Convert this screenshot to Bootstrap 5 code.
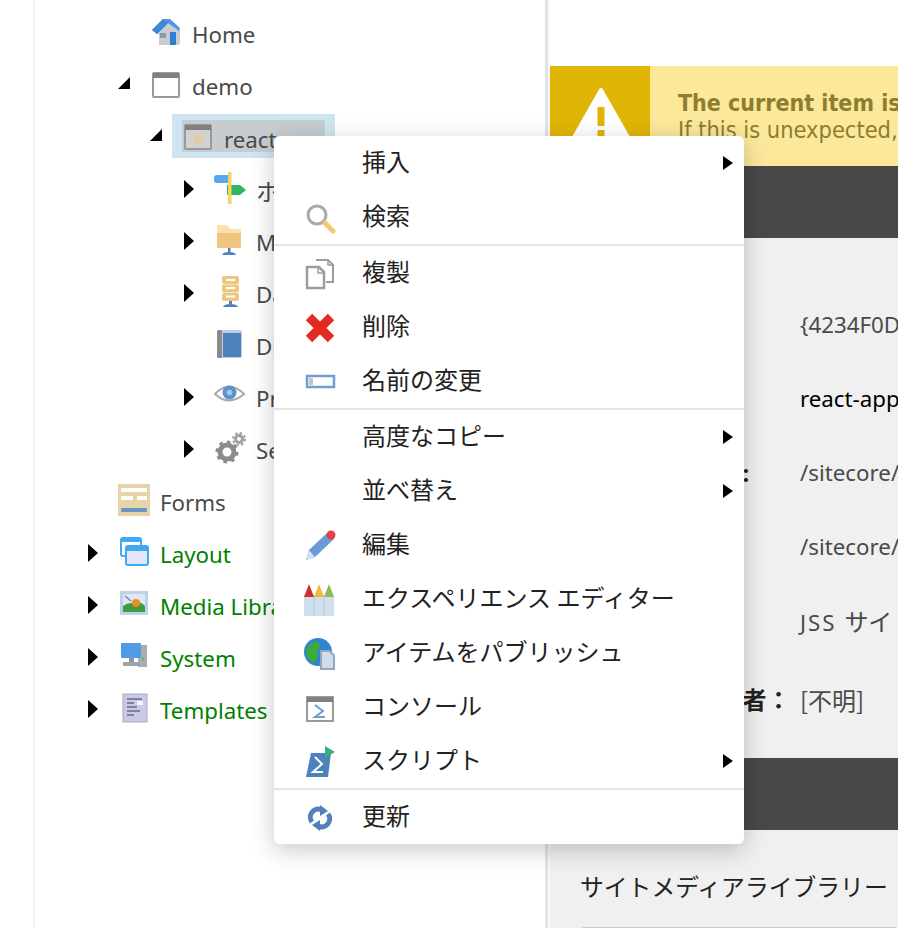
<!DOCTYPE html>
<html lang="ja">
<head>
  <meta charset="UTF-8" />
  <meta name="viewport" content="width=device-width, initial-scale=1.0"/>
  <title>Content Editor</title>
  <link href="https://cdn.jsdelivr.net/npm/bootstrap@5.3.3/dist/css/bootstrap.min.css" rel="stylesheet">
  <style>
    html, body { height: 100%; overflow: hidden; }
    body {
      background: #fff;
      font-family: "Noto Sans", "Noto Sans CJK JP", sans-serif;
      font-size: 22.3px;
      color: #4a4a4a;
    }
    .cjk-text { font-family: "Noto Sans CJK JP", sans-serif; font-size: 24px; }
    .tree-pane { width: 545px; flex: none; padding-left: 33px; }
    .tree-inner { border-left: 2px solid #f1f1f1; height: 100%; padding-top: 9px; }
    .tree-row { height: 52px; display: flex; align-items: center; white-space: nowrap; }
    .lvl-1 { padding-left: 51px; }
    .lvl-2 { padding-left: 83px; }
    .lvl-3 { padding-left: 115px; }
    .lvl-4 { padding-left: 147px; }
    .arrow-slot { width: 32px; flex: none; display: flex; padding-left: 2px; margin-top: -4px; }
    .arrow-down { padding-left: 0; margin-top: -8px; }
    .icon-slot { width: 32px; height: 32px; flex: none; margin-right: 10px; margin-top: -6px; }
    .tree-system { color: #008000; }
    .sel-outer { background: #cfe6f2; margin-top: -6px; padding: 6px 10px; }
    .sel-inner { background: #c6ccd0; height: 32px; display: flex; align-items: center; padding-right: 1px; }
    .sel-inner .icon-slot { margin-top: 0; }
    .sel-inner span { position: relative; top: 4px; }
    .arrow-short { width: 22px; }
    .splitter { width: 5px; flex: none; background: #f9f9f9; border-left: 3px solid #e3e3e3; }
    .main-pane { width: 348px; flex: none; overflow: hidden; white-space: nowrap; background: #f0f0f0; }
    .main-top { height: 66px; background: #fff; }
    .warn-box { height: 100px; background: #fce89b; color: #8c7d30; }
    .warn-icon { width: 100px; height: 100px; flex: none; background: #e0b506; }
    .warn-text { padding: 24px 0 0 28px; line-height: 27px; font-size: 23.4px; font-family: "DejaVu Sans Condensed", "Noto Sans", sans-serif; }
    .warn-title { font-weight: 700; font-size: 23px; }
    .dark-bar { height: 72px; background: #484848; }
    .field-list { height: 520px; padding: 50px 0 0 27px; }
    .field-row { height: 74px; display: flex; align-items: center; }
    .field-label { width: 223px; flex: none; font-weight: 700; color: #222; font-size: 24px; }
    .field-owner { margin-top: 5px; }
    .field-name { color: #000; }
    .spaced-text { letter-spacing: 2px; }
    .media-box { padding: 35px 0 0 30px; color: #222; font-size: 23.8px; line-height: 44px; }
    .media-input { height: 30px; margin-top: 18px; background: #fff; border: 2px solid #ccc; border-radius: 4px; }
    .ctx-menu {
      left: 274px; top: 136px; width: 470px; padding: 0; margin: 0;
      border: 0; border-radius: 6px; background: #fff;
      box-shadow: 0 6px 24px rgba(0,0,0,.22);
      font-size: 24px; z-index: 10;
    }
    .ctx-menu .dropdown-item {
      height: 54px; padding: 0 11px 0 30px; color: #222; line-height: 1;
      font-family: "Noto Sans CJK JP", sans-serif;
    }
    .ctx-menu .dropdown-divider { margin: 0; border-top: 2px solid #e4e4e4; opacity: 1; }
    .ctx-icon { width: 32px; height: 32px; flex: none; margin-right: 26px; margin-top: 2px; }
    .ctx-label { flex: 1; position: relative; top: -2px; }
  </style>
</head>
<body>

  <svg width="0" height="0" class="position-absolute">
    <symbol id="arrow-right" viewBox="0 0 10 18"><path d="M0 0 10 9 0 18z" fill="#000"/></symbol>
    <symbol id="arrow-open" viewBox="0 0 12 12"><path d="M12 0V12H0z" fill="#000"/></symbol>
  </svg>

  <div class="d-flex h-100">

    <!-- Left: tree -->
    <div class="tree-pane">
      <div class="tree-inner">

        <div class="tree-row lvl-2">
          <div class="arrow-slot"></div>
          <svg class="icon-slot" viewBox="0 0 32 32"><path d="M4 15 9 19V29H27Q30 29 30 27V14L18 5H12z" fill="#c9ccd0"/><path d="M2 14 13 3H20L30 12 29 15 18 7 7 18z" fill="#4f97e3"/><path d="M2 14 13 3 18 7 7 18z" fill="#3c86d6"/><rect x="10" y="17" width="6" height="5" fill="#8f9aa5"/><rect x="20" y="16" width="6" height="13" fill="#2f7fd8"/></svg>
          <span>Home</span>
        </div>

        <div class="tree-row lvl-2">
          <div class="arrow-slot arrow-down"><svg width="12" height="12"><use href="#arrow-open"/></svg></div>
          <svg class="icon-slot" viewBox="0 0 32 32"><rect x="3" y="5" width="26" height="24" rx="1" fill="#fff" stroke="#999" stroke-width="2"/><rect x="3" y="5" width="26" height="5" fill="#808080"/></svg>
          <span>demo</span>
        </div>

        <div class="tree-row lvl-3">
          <div class="arrow-slot arrow-down arrow-short"><svg width="12" height="12"><use href="#arrow-open"/></svg></div>
          <div class="sel-outer">
            <div class="sel-inner">
              <svg class="icon-slot" viewBox="0 0 32 32"><rect x="3" y="5" width="26" height="24" rx="1" fill="#d2d2d0" stroke="#999" stroke-width="2"/><rect x="3" y="5" width="26" height="5" fill="#808080"/><path d="M16 12 18 17H23L19 20 20.500 25 16 22 11.500 25 13 20 9 17H14z" fill="#e3cc9a"/></svg>
              <span>react-app</span>
            </div>
          </div>
        </div>

        <div class="tree-row lvl-4">
          <div class="arrow-slot"><svg width="10" height="18"><use href="#arrow-right"/></svg></div>
          <svg class="icon-slot" viewBox="0 0 32 32"><rect x="0" y="3" width="16" height="8" rx="3" fill="#5aa6f0"/><path d="M13 13H26L32 18 26 23H13z" fill="#2fb566"/><rect x="14" y="0" width="3.500" height="32" fill="#f4d55e"/></svg>
          <span class="cjk-text">ホーム</span>
        </div>

        <div class="tree-row lvl-4">
          <div class="arrow-slot"><svg width="10" height="18"><use href="#arrow-right"/></svg></div>
          <svg class="icon-slot" viewBox="0 0 32 32"><path d="M3 1H13L16 5H27V24H3z" fill="#fbe0ad"/><path d="M3 9H27V22Q27 24 25 24H5Q3 24 3 22z" fill="#eec67f"/><rect x="14" y="24" width="2.500" height="5" fill="#4f81bd"/><path d="M8 31Q9 28 15 28 21 28 22 31z" fill="#4f81bd"/></svg>
          <span>Media Library</span>
        </div>

        <div class="tree-row lvl-4">
          <div class="arrow-slot"><svg width="10" height="18"><use href="#arrow-right"/></svg></div>
          <svg class="icon-slot" viewBox="0 0 32 32"><rect x="8" y="0" width="17" height="8" rx="2" fill="#eec67f"/><rect x="8" y="8.500" width="17" height="8" rx="2" fill="#eec67f"/><rect x="8" y="17" width="17" height="8" rx="2" fill="#eec67f"/><rect x="12" y="3" width="9" height="2" fill="#fff"/><rect x="12" y="11" width="9" height="2" fill="#fff"/><rect x="12" y="19.500" width="9" height="2" fill="#fff"/><rect x="15" y="25" width="3" height="3" fill="#4f81bd"/><path d="M9 31Q10 28 16.500 28 23 28 24 31z" fill="#4f81bd"/></svg>
          <span>Data</span>
        </div>

        <div class="tree-row lvl-4">
          <div class="arrow-slot"></div>
          <svg class="icon-slot" viewBox="0 0 32 32"><rect x="3" y="2" width="25" height="28" rx="2" fill="#b9cfe8"/><rect x="3" y="2" width="5" height="28" rx="1.500" fill="#8a8a8a"/><rect x="9" y="5" width="18" height="24" fill="#4f81bd"/></svg>
          <span>Dictionary</span>
        </div>

        <div class="tree-row lvl-4">
          <div class="arrow-slot"><svg width="10" height="18"><use href="#arrow-right"/></svg></div>
          <svg class="icon-slot" viewBox="0 0 32 32"><path d="M1 14Q15-1 30 14 15 27 1 14z" fill="#fff" stroke="#aaa" stroke-width="2"/><circle cx="15.500" cy="12.500" r="7" fill="#5c93cf"/><circle cx="15.500" cy="12.500" r="2.800" fill="#a9c4e2"/></svg>
          <span>Presentation</span>
        </div>

        <div class="tree-row lvl-4">
          <div class="arrow-slot"><svg width="10" height="18"><use href="#arrow-right"/></svg></div>
          <svg class="icon-slot" viewBox="0 0 32 32"><circle cx="13" cy="20" r="7" fill="none" stroke="#8c8c8c" stroke-width="5"/><circle cx="13" cy="20" r="10" fill="none" stroke="#8c8c8c" stroke-width="3" stroke-dasharray="3.500 4.300"/><circle cx="25" cy="7" r="3.500" fill="none" stroke="#a0a0a0" stroke-width="3"/><circle cx="25" cy="7" r="6" fill="none" stroke="#a0a0a0" stroke-width="2" stroke-dasharray="2.500 2.200"/></svg>
          <span>Settings</span>
        </div>

        <div class="tree-row lvl-1">
          <div class="arrow-slot"></div>
          <svg class="icon-slot" viewBox="0 0 32 32"><rect width="32" height="32" y="0" fill="#e6d4a8"/><rect x="3" y="4" width="26" height="4" fill="#fff"/><rect x="3" y="12" width="12" height="4" fill="#fff"/><rect x="19" y="12" width="10" height="4" fill="#fff"/><rect x="3" y="24" width="26" height="4" rx="1" fill="#6a94c6"/></svg>
          <span>Forms</span>
        </div>

        <div class="tree-row lvl-1 tree-system">
          <div class="arrow-slot"><svg width="10" height="18"><use href="#arrow-right"/></svg></div>
          <svg class="icon-slot" viewBox="0 0 32 32"><rect x="3" y="2" width="20" height="18" rx="2" fill="#fff" stroke="#3fa9f5" stroke-width="2"/><rect x="3" y="2" width="20" height="4" fill="#3fa9f5"/><rect x="8" y="10" width="22" height="19" rx="2" fill="#e4e7fa" stroke="#3fa9f5" stroke-width="2"/><rect x="8" y="10" width="22" height="5" fill="#3fa9f5"/></svg>
          <span>Layout</span>
        </div>

        <div class="tree-row lvl-1 tree-system">
          <div class="arrow-slot"><svg width="10" height="18"><use href="#arrow-right"/></svg></div>
          <svg class="icon-slot" viewBox="0 0 32 32"><rect x="2" y="3" width="28" height="24" fill="#bcd2ec"/><rect x="5" y="6" width="22" height="18" fill="#dfe8f2"/><path d="M5 18Q12 13 16 16 22 12 27 18V24H5z" fill="#3f9b3f"/><circle cx="18" cy="15" r="4" fill="#ef8a26"/><path d="M7 8 13 13" stroke="#7a8a9a" stroke-width="1.500"/></svg>
          <span>Media Library</span>
        </div>

        <div class="tree-row lvl-1 tree-system">
          <div class="arrow-slot"><svg width="10" height="18"><use href="#arrow-right"/></svg></div>
          <svg class="icon-slot" viewBox="0 0 32 32"><rect x="20" y="5" width="9" height="22" fill="#a8aeb8"/><rect x="3" y="3" width="20" height="15" rx="1" fill="#4f9be8"/><rect x="11" y="18" width="5" height="4" fill="#8b95a3"/><rect x="5" y="22" width="17" height="4" fill="#9aa3ae"/><rect x="24" y="17" width="2" height="4" fill="#5fbf5f"/></svg>
          <span>System</span>
        </div>

        <div class="tree-row lvl-1 tree-system">
          <div class="arrow-slot"><svg width="10" height="18"><use href="#arrow-right"/></svg></div>
          <svg class="icon-slot" viewBox="0 0 32 32"><rect x="5" y="2" width="24" height="28" fill="#c9c9e6" stroke="#a9a9c4"/><path d="M9 7H24M9 11H16M9 15H19M9 19H22M9 23H16" stroke="#666a8c" stroke-width="1.500"/><rect x="19" y="9" width="6" height="4" fill="#f3f3fb"/></svg>
          <span>Templates</span>
        </div>

      </div>
    </div>

    <div class="splitter"></div>

    <!-- Right: item details -->
    <div class="main-pane">
      <div class="main-top"></div>

      <div class="warn-box d-flex">
        <div class="warn-icon">
          <svg width="100" height="100" viewBox="0 0 100 100"><path d="M51 24 92 96H10z" fill="#fff" stroke="#fff" stroke-linejoin="round" stroke-width="4"/><rect x="47.500" y="41" width="7" height="19" fill="#e0b506"/><rect x="47.500" y="64" width="7" height="7" fill="#e0b506"/></svg>
        </div>
        <div class="warn-text">
          <div class="warn-title">The current item is not published.</div>
          <div>If this is unexpected, please contact support.</div>
        </div>
      </div>

      <div class="dark-bar"></div>

      <div class="field-list">
        <div class="field-row"><div class="field-label">項目 ID:</div><div>{4234F0D9-1A2B-4C3D-8E9F}</div></div>
        <div class="field-row"><div class="field-label">アイテム名:</div><div class="field-name">react-app</div></div>
        <div class="field-row"><div class="field-label">アイテムのパス:</div><div>/sitecore/content/demo/react-app</div></div>
        <div class="field-row"><div class="field-label">テンプレート:</div><div>/sitecore/templates/Project/App</div></div>
        <div class="field-row"><div class="field-label">作成元:</div><div><span class="spaced-text">JSS </span><span class="cjk-text">サイト</span></div></div>
        <div class="field-row field-owner"><div class="field-label">アイテムの所有者：</div><div class="cjk-text">[不明]</div></div>
      </div>

      <div class="dark-bar"></div>

      <div class="media-box">
        <div>サイトメディアライブラリー</div>
        <div class="media-input"></div>
      </div>
    </div>
  </div>

  <!-- Context menu -->
  <div class="dropdown-menu show position-absolute ctx-menu">
    <div class="dropdown-item d-flex align-items-center">
      <span class="ctx-icon"></span><span class="ctx-label">挿入</span>
      <svg width="10" height="14" viewBox="0 0 10 14"><path d="M0 0 10 7 0 14z" fill="#000"/></svg>
    </div>
    <div class="dropdown-item d-flex align-items-center">
      <svg class="ctx-icon" viewBox="0 0 32 32"><circle cx="13" cy="13" r="9" fill="#fff" stroke="#a9a9a9" stroke-width="3"/><path d="M21 21 29 29" stroke="#f2c879" stroke-width="5" stroke-linecap="round"/></svg>
      <span class="ctx-label">検索</span>
    </div>
    <div class="dropdown-divider"></div>
    <div class="dropdown-item d-flex align-items-center">
      <svg class="ctx-icon" viewBox="0 0 32 32"><path d="M12 2H24L29 7V24H22" fill="#fff" stroke="#9c9c9c" stroke-width="2"/><path d="M3 9H15L20 14V30H3z" fill="#fff" stroke="#9c9c9c" stroke-width="2.500"/><path d="M14 9V15H20M24 2V7H29" fill="none" stroke="#9c9c9c" stroke-width="1.500"/></svg>
      <span class="ctx-label">複製</span>
    </div>
    <div class="dropdown-item d-flex align-items-center">
      <svg class="ctx-icon" viewBox="0 0 32 32"><path d="M5 5 27 27M27 5 5 27" stroke="#e02b20" stroke-width="9"/></svg>
      <span class="ctx-label">削除</span>
    </div>
    <div class="dropdown-item d-flex align-items-center">
      <svg class="ctx-icon" viewBox="0 0 32 32"><rect x="3" y="10" width="27" height="11" fill="#fff" stroke="#6f9fd0" stroke-width="2.500"/><rect x="5" y="12" width="4" height="7" fill="#c4c4c4"/></svg>
      <span class="ctx-label">名前の変更</span>
    </div>
    <div class="dropdown-divider"></div>
    <div class="dropdown-item d-flex align-items-center">
      <span class="ctx-icon"></span><span class="ctx-label">高度なコピー</span>
      <svg width="10" height="14" viewBox="0 0 10 14"><path d="M0 0 10 7 0 14z" fill="#000"/></svg>
    </div>
    <div class="dropdown-item d-flex align-items-center">
      <span class="ctx-icon"></span><span class="ctx-label">並べ替え</span>
      <svg width="10" height="14" viewBox="0 0 10 14"><path d="M0 0 10 7 0 14z" fill="#000"/></svg>
    </div>
    <div class="dropdown-item d-flex align-items-center">
      <svg class="ctx-icon" viewBox="0 0 32 32"><path d="M5 20 23 3 30 9 11 27 2 30z" fill="#6a9bd4"/><path d="M2 30 5 20 11 27z" fill="#cfe0f2"/><circle cx="27" cy="5" r="4.500" fill="#e2404a"/></svg>
      <span class="ctx-label">編集</span>
    </div>
    <div class="dropdown-item d-flex align-items-center">
      <svg class="ctx-icon" viewBox="0 0 32 32"><rect x="0" y="11" width="30" height="21" fill="#cfe0ec"/><path d="M0 13 5 0 10 13z" fill="#c8342c"/><path d="M10 13 15 0 20 13z" fill="#f0b93a"/><path d="M20 13 25 0 30 13z" fill="#8fb85c"/><path d="M10 13V32M20 13V32" stroke="#b4c8d6"/></svg>
      <span class="ctx-label">エクスペリエンス エディター</span>
    </div>
    <div class="dropdown-item d-flex align-items-center">
      <svg class="ctx-icon" viewBox="0 0 32 32"><circle cx="14" cy="14" r="14" fill="#2f86d0"/><path d="M2 11Q8 2 14 4 18 10 13 14 16 21 9 25 1 20 2 11z" fill="#3fa83f"/><path d="M16 12H26L31 17V32H16z" fill="#9aa5b5"/><path d="M18 14H25L29 18V30H18z" fill="#cfdcee"/></svg>
      <span class="ctx-label">アイテムをパブリッシュ</span>
    </div>
    <div class="dropdown-item d-flex align-items-center">
      <svg class="ctx-icon" viewBox="0 0 32 32"><rect x="3" y="5" width="26" height="24" fill="#fff" stroke="#9a9a9a" stroke-width="2"/><rect x="3" y="5" width="26" height="5" fill="#808080"/><path d="M11 13 19 19 11 25H21" fill="none" stroke="#6a9bd4" stroke-width="2"/></svg>
      <span class="ctx-label">コンソール</span>
    </div>
    <div class="dropdown-item d-flex align-items-center">
      <svg class="ctx-icon" viewBox="0 0 32 32"><path d="M7 7H27L24 31H2z" fill="#4f81bd"/><path d="M21 0 31 6 21 12z" fill="#35b07a"/><path d="M11 11 18 18 9 26H19" fill="none" stroke="#fff" stroke-width="2"/></svg>
      <span class="ctx-label">スクリプト</span>
      <svg width="10" height="14" viewBox="0 0 10 14"><path d="M0 0 10 7 0 14z" fill="#000"/></svg>
    </div>
    <div class="dropdown-divider"></div>
    <div class="dropdown-item d-flex align-items-center">
      <svg class="ctx-icon" viewBox="0 0 32 32"><path d="M8 20A8 8 0 0 1 18 8" fill="none" stroke="#4f81bd" stroke-width="5"/><path d="M16 3 24 9 16 14z" fill="#4f81bd"/><path d="M24 12A8 8 0 0 1 14 24" fill="none" stroke="#4f81bd" stroke-width="5"/><path d="M16 29 8 23 16 18z" fill="#4f81bd"/></svg>
      <span class="ctx-label">更新</span>
    </div>
  </div>

  <script src="https://cdn.jsdelivr.net/npm/bootstrap@5.3.3/dist/js/bootstrap.bundle.min.js"></script>
</body>
</html>
